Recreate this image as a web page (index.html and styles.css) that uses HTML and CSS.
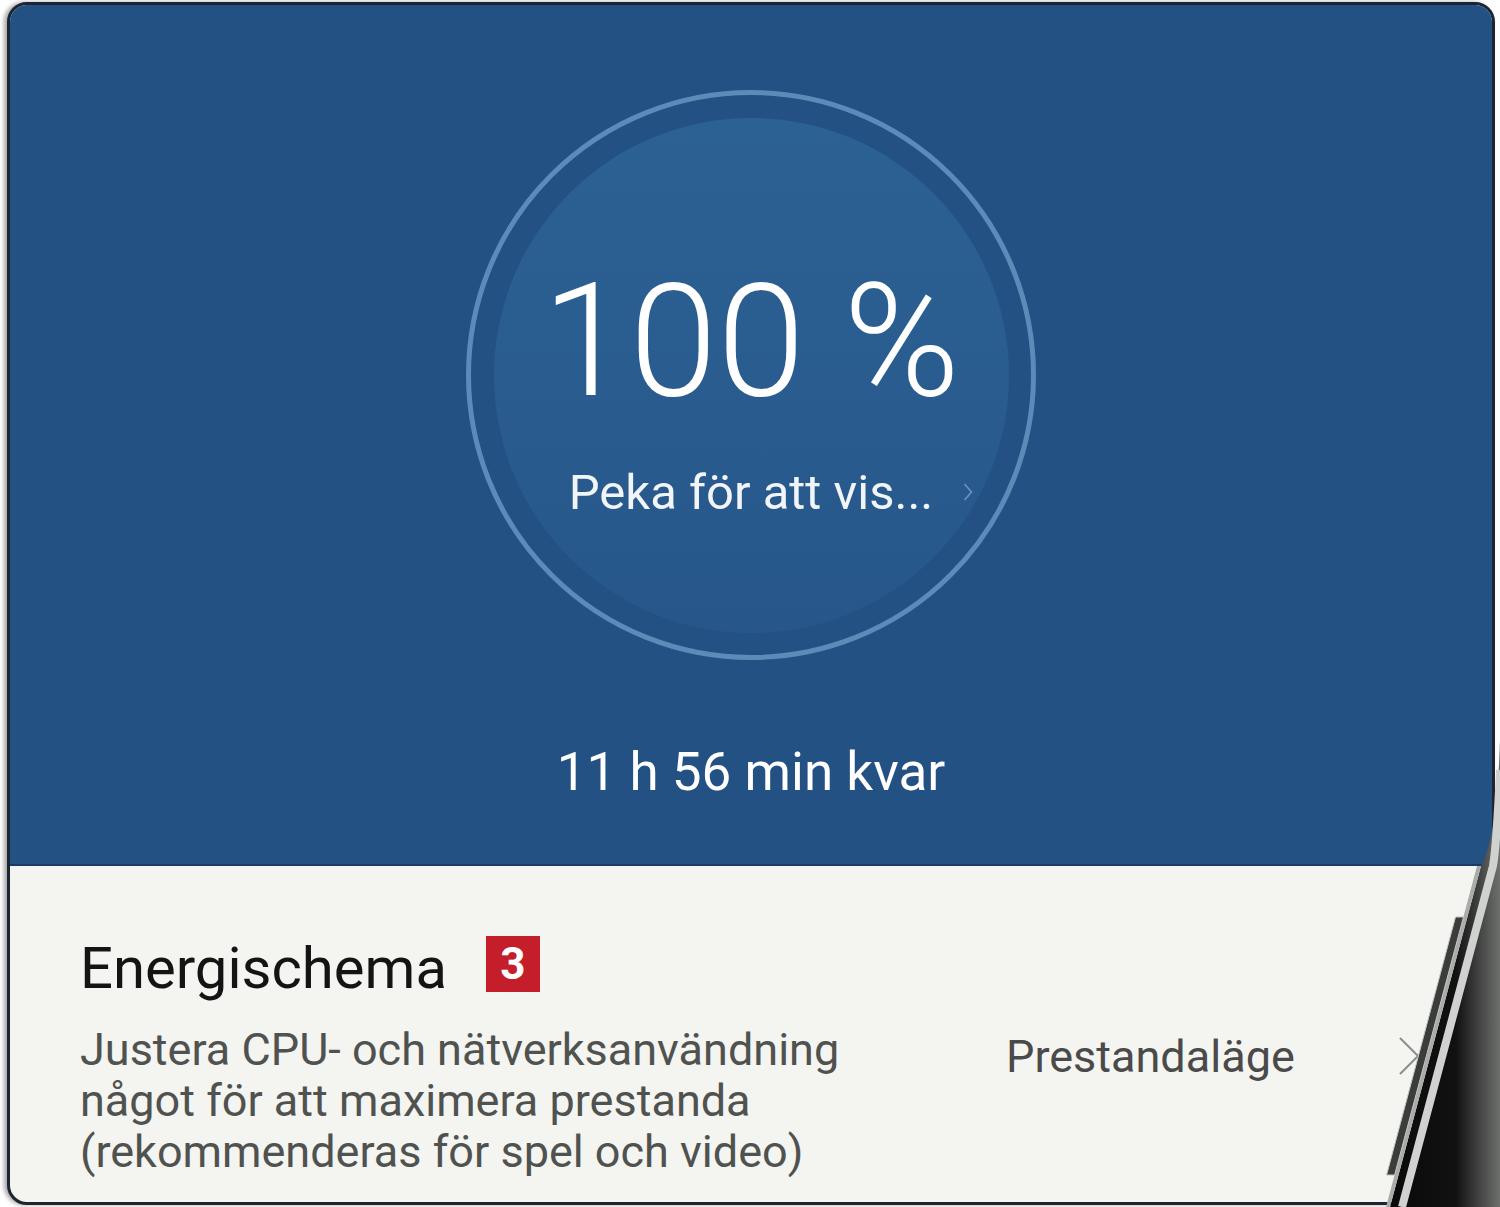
FILE: index.html
```html
<!DOCTYPE html>
<html>
<head>
  <title>Batteri</title>
  <link rel="stylesheet" href="styles.css">
</head>
<body>
  <div class="page">
    <div class="screen">
      <section class="battery">
        <div class="ring">
          <div class="disc">
            <div class="level">100 %</div>
            <div class="hint">
              <span>Peka för att vis...</span>
              <svg class="hint-arrow" width="10" height="20" viewBox="0 0 10 20"><polyline points="1.5,2 8.5,10 1.5,18" fill="none" stroke="#6f93bb" stroke-width="1.6"/></svg>
            </div>
          </div>
        </div>
        <div class="remaining">11 h 56 min kvar</div>
      </section>

      <section class="plan">
        <div class="plan-text">
          <div class="plan-title">
            <span>Energischema</span>
            <span class="badge">3</span>
          </div>
          <p class="plan-desc">Justera CPU- och nätverksanvändning något för att maximera prestanda (rekommenderas för spel och video)</p>
        </div>
        <div class="plan-value">
          <span>Prestandaläge</span>
          <svg class="plan-arrow" width="20" height="38" viewBox="0 0 20 38"><polyline points="1,1 19,19 1,37" fill="none" stroke="#8c8e8c" stroke-width="2"/></svg>
        </div>
      </section>
    </div>

    <!-- phone edge lying over the screen -->
    <svg class="bezel" width="1500" height="1207" viewBox="0 0 1500 1207">
      <defs>
        <linearGradient id="metal" x1="1390" y1="0" x2="1500" y2="0" gradientUnits="userSpaceOnUse">
          <stop offset="0" stop-color="#0a0a0a"/>
          <stop offset="0.6" stop-color="#111"/>
          <stop offset="1" stop-color="#6e706e"/>
        </linearGradient>
      </defs>
      <path d="M1500 740 C1498 800 1493 845 1481 866 L1390 1207 L1500 1207 Z" fill="url(#metal)"/>
      <polygon points="1477,866 1481,866 1390,1207 1386,1207" fill="#a9aca9"/>
      <path d="M1500 770 C1498 815 1496 848 1493 866 L1402 1207" fill="none" stroke="#cfd2cf" stroke-width="8"/>
      <polygon points="1455.5,917 1463.5,917 1394.6,1175 1386.6,1175" fill="#3b3d3b" stroke="#c4c6c4" stroke-width="1"/>
    </svg>
  </div>
</body>
</html>
```

FILE: styles.css
```css
body {
  margin: 0;
  background: #fff;
  font-family: Roboto, "Noto Sans", sans-serif;
}
.page {
  position: relative;
  width: 1500px;
  height: 1207px;
  overflow: hidden;
}
.screen {
  margin: 2px 0 0 7px;
  width: 1488px;
  height: 1203px;
  box-sizing: border-box;
  border: 3px solid #1c2633;
  border-radius: 20px;
  overflow: hidden;
  background: #f4f4f1;
  box-shadow: -3px 0 4px rgba(0, 0, 0, 0.35);
}
.battery {
  height: 861px;
  box-sizing: border-box;
  padding-top: 85px;
  background: #245183;
  border-bottom: 2px solid #173c68;
  display: flex;
  flex-direction: column;
  align-items: center;
}
.ring {
  width: 570px;
  height: 570px;
  box-sizing: border-box;
  border: 5px solid #5a8bb9;
  border-radius: 50%;
  display: flex;
  align-items: center;
  justify-content: center;
}
.disc {
  width: 515px;
  height: 515px;
  box-sizing: border-box;
  padding-top: 143px;
  border-radius: 50%;
  background: linear-gradient(#2c6194, #27578a);
  display: flex;
  flex-direction: column;
  align-items: center;
  color: #fff;
}
.level {
  font-size: 158px;
  font-weight: 300;
  line-height: 160px;
}
.hint {
  margin-top: 44px;
  font-size: 49px;
  line-height: 55px;
  color: #f2f5f8;
  display: flex;
  align-items: center;
}
.hint-arrow {
  margin-left: 30px;
  margin-right: -40px;
}
.remaining {
  margin-top: 82px;
  font-size: 53px;
  line-height: 60px;
  color: #fff;
}
.plan {
  display: flex;
  align-items: center;
  padding: 69px 0 0 70px;
}
.plan-text {
  width: 926px;
}
.plan-title {
  display: flex;
  align-items: flex-start;
  font-size: 58px;
  line-height: 67px;
  color: #141414;
}
.badge {
  margin: 1px 0 0 39px;
  width: 54px;
  height: 56px;
  background: #c41e2a;
  color: #fff;
  font-size: 44px;
  font-weight: 700;
  line-height: 56px;
  text-align: center;
}
.plan-desc {
  margin: 22px 0 0;
  max-width: 800px;
  font-size: 45px;
  line-height: 51px;
  color: #4f524f;
}
.plan-value {
  display: flex;
  align-items: center;
  font-size: 45px;
  line-height: 51px;
  color: #4a4a4a;
}
.plan-arrow {
  margin-left: 104px;
}
.bezel {
  position: absolute;
  top: 0;
  left: 0;
  pointer-events: none;
}
```
